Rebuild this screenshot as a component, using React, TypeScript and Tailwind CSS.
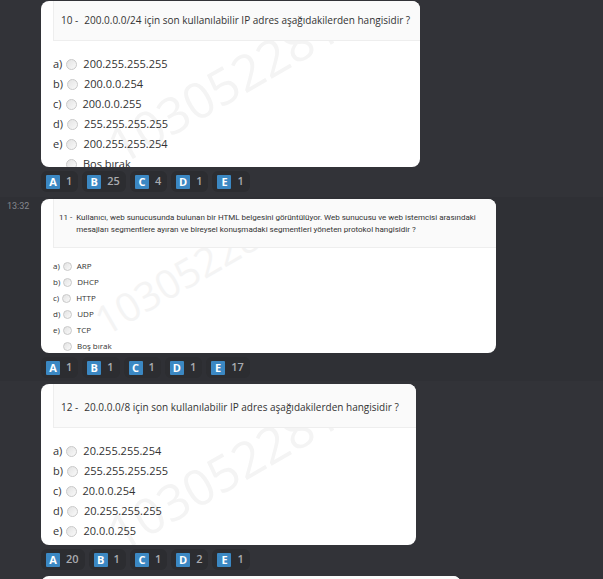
import React from "react";

type Reaction = { letter: string; count: number };

type Size = "large" | "small";

type Message = {
  id: string;
  time?: string;
  size: Size;
  number: string;
  question: string;
  options: { letter: string; text: string }[];
  reactions: Reaction[];
  row: string;
  card: string;
  header: string;
  mark: string;
};

const messages: Message[] = [
  {
    id: "q10",
    size: "large",
    number: "10 -",
    question: "200.0.0.0/24 için son kullanılabilir IP adres aşağıdakilerden hangisidir ?",
    options: [
      { letter: "a)", text: "200.255.255.255" },
      { letter: "b)", text: "200.0.0.254" },
      { letter: "c)", text: "200.0.0.255" },
      { letter: "d)", text: "255.255.255.255" },
      { letter: "e)", text: "200.255.255.254" },
      { letter: "", text: "Boş bırak" },
    ],
    reactions: [
      { letter: "A", count: 1 },
      { letter: "B", count: 25 },
      { letter: "C", count: 4 },
      { letter: "D", count: 1 },
      { letter: "E", count: 1 },
    ],
    row: "bg-[#323338] pt-px pb-[5px]",
    card: "max-w-[379px] h-[166px]",
    header: "h-10 pt-[11px]",
    mark: "left-[83px] top-[120px] text-[50px]",
  },
  {
    id: "q11",
    time: "13:32",
    size: "small",
    number: "11 -",
    question:
      "Kullanıcı, web sunucusunda bulunan bir HTML belgesini görüntülüyor. Web sunucusu ve web istemcisi arasındaki mesajları segmentlere ayıran ve bireysel konuşmadaki segmentleri yöneten protokol hangisidir ?",
    options: [
      { letter: "a)", text: "ARP" },
      { letter: "b)", text: "DHCP" },
      { letter: "c)", text: "HTTP" },
      { letter: "d)", text: "UDP" },
      { letter: "e)", text: "TCP" },
      { letter: "", text: "Boş bırak" },
    ],
    reactions: [
      { letter: "A", count: 1 },
      { letter: "B", count: 1 },
      { letter: "C", count: 1 },
      { letter: "D", count: 1 },
      { letter: "E", count: 17 },
    ],
    row: "bg-[#2f3035] pt-0.5 pb-[3px]",
    card: "max-w-[455px] h-[154px]",
    header: "h-[49px] pt-[13px]",
    mark: "left-[67px] top-[102px] text-[40px]",
  },
  {
    id: "q12",
    size: "large",
    number: "12 -",
    question: "20.0.0.0/8 için son kullanılabilir IP adres aşağıdakilerden hangisidir ?",
    options: [
      { letter: "a)", text: "20.255.255.254" },
      { letter: "b)", text: "255.255.255.255" },
      { letter: "c)", text: "20.0.0.254" },
      { letter: "d)", text: "20.255.255.255" },
      { letter: "e)", text: "20.0.0.255" },
    ],
    reactions: [
      { letter: "A", count: 20 },
      { letter: "B", count: 1 },
      { letter: "C", count: 1 },
      { letter: "D", count: 2 },
      { letter: "E", count: 1 },
    ],
    row: "bg-[#323338] pt-[3px] pb-1",
    card: "max-w-[375px] h-[161px]",
    header: "h-[44px] pt-[15px]",
    mark: "left-[83px] top-[124px] text-[50px]",
  },
];

function QuestionCard({ message }: { message: Message }) {
  const large = message.size === "large";
  return (
    <form className={`relative w-full overflow-hidden rounded-lg bg-white pl-3 text-[#333] ${message.card}`}>
      <span
        aria-hidden="true"
        className={`pointer-events-none absolute origin-bottom-left -rotate-30 leading-none whitespace-nowrap text-[#f4f4f4] ${message.mark}`}
      >
        103052281
      </span>
      <fieldset className="relative">
        <legend
          className={`flex w-full border-b border-l border-[#eeeeee] bg-[#fafafa] ${message.header} ${
            large
              ? "gap-1.5 pl-[7px] text-[10px] leading-4"
              : "gap-1 pl-[5px] font-['Roboto','Noto_Sans',sans-serif] text-[8px] leading-3"
          }`}
        >
          <span className="shrink-0">{message.number}</span>
          <span>{message.question}</span>
        </legend>
        <div className={large ? "pt-[13px]" : "pt-2.5"}>
          {message.options.map((option) => (
            <label
              key={option.text}
              className={`flex items-center ${large ? "h-5 gap-1 text-[11px]" : "h-4 gap-[3px] text-[8px]"}`}
            >
              {option.letter ? <span>{option.letter}</span> : <span className={large ? "w-[9px]" : "w-[7px]"} />}
              <input
                type="radio"
                name={message.id}
                className={`shrink-0 appearance-none rounded-full border border-[#c9c9c9] bg-linear-to-br from-[#e2e2e2] to-[#fafafa] ${
                  large ? "size-[11px]" : "size-[9px]"
                }`}
              />
              <span className="pl-0.5">{option.text}</span>
            </label>
          ))}
        </div>
      </fieldset>
    </form>
  );
}

function Reactions({ items }: { items: Reaction[] }) {
  return (
    <div className="flex flex-wrap gap-1 pt-1">
      {items.map((item) => (
        <button
          key={item.letter}
          type="button"
          className="flex h-[21px] items-center gap-1.5 rounded-md bg-[#2c2d31] pr-1.5 pl-[5px] text-[11px] font-semibold text-[#a9abb0]"
        >
          <span className="flex size-[14px] items-center justify-center rounded-[1px] bg-[#3b88c3] text-[11px] leading-none font-bold text-white">
            {item.letter}
          </span>
          <span>{item.count}</span>
        </button>
      ))}
    </div>
  );
}

export default function App() {
  return (
    <main className="h-screen overflow-hidden bg-[#323338] font-['Open_Sans','Noto_Sans',sans-serif]">
      {messages.map((message) => (
        <article key={message.id} className={`flex pr-4 ${message.row}`}>
          <div className="w-[41px] shrink-0 pt-px pl-[7px]">
            {message.time && (
              <time className="block font-['Roboto',sans-serif] text-[9px] leading-3 text-[#85888f]">{message.time}</time>
            )}
          </div>
          <div className="min-w-0 flex-1">
            <QuestionCard message={message} />
            <Reactions items={message.reactions} />
          </div>
        </article>
      ))}
      <article className="flex pt-0.5 pr-4 pl-[41px]">
        <div className="h-40 w-full max-w-[420px] overflow-hidden rounded-lg bg-white pl-2">
          <div className="h-10 bg-[#fafafa]" />
        </div>
      </article>
    </main>
  );
}
